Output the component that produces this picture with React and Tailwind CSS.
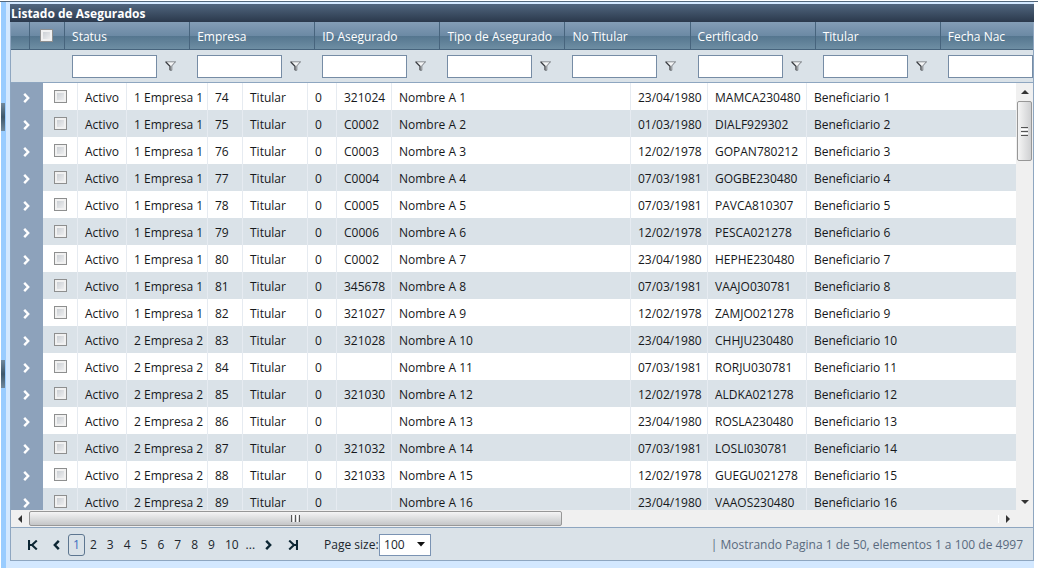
import { useState } from "react";
import clsx from "clsx";

const filters = ["Status", "Empresa", "ID Asegurado", "Tipo de Asegurado", "No Titular", "Certificado", "Titular", "Fecha Nac"];

// empresa, id, certificado, no, fecha, clave
const data = [
    [1, 74, "321024", 1, "23/04/1980", "MAMCA230480"],
    [1, 75, "C0002", 2, "01/03/1980", "DIALF929302"],
    [1, 76, "C0003", 3, "12/02/1978", "GOPAN780212"],
    [1, 77, "C0004", 4, "07/03/1981", "GOGBE230480"],
    [1, 78, "C0005", 5, "07/03/1981", "PAVCA810307"],
    [1, 79, "C0006", 6, "12/02/1978", "PESCA021278"],
    [1, 80, "C0002", 7, "23/04/1980", "HEPHE230480"],
    [1, 81, "345678", 8, "07/03/1981", "VAAJO030781"],
    [1, 82, "321027", 9, "12/02/1978", "ZAMJO021278"],
    [2, 83, "321028", 10, "23/04/1980", "CHHJU230480"],
    [2, 84, "", 11, "07/03/1981", "RORJU030781"],
    [2, 85, "321030", 12, "12/02/1978", "ALDKA021278"],
    [2, 86, "", 13, "23/04/1980", "ROSLA230480"],
    [2, 87, "321032", 14, "07/03/1981", "LOSLI030781"],
    [2, 88, "321033", 15, "12/02/1978", "GUEGU021278"],
    [2, 89, "", 16, "23/04/1980", "VAAOS230480"],
];

function FunnelIcon() {
    return (
        <svg width="11" height="10" viewBox="0 0 11 10" fill="none">
            <path d="M0.4 0.8h10.2L6.9 4.8v4L4.6 9.5V4.8z" fill="#f4f5f6" />
            <path d="M0 0.8h11" stroke="#8b8f95" strokeWidth="1" />
            <path d="M0.8 1L5 5.2v4" stroke="#3a3d42" strokeWidth="1.3" />
            <path d="M10.2 1L6.8 4.9v4.4H5" stroke="#6c7076" strokeWidth="0.9" />
        </svg>
    );
}

function Chevron({ flip, className }) {
    return (
        <svg width="7" height="10" viewBox="0 0 7 10" fill="none" className={className}>
            <path d={flip ? "M5.8 0.8L1.8 5l4 4.2" : "M1.2 0.8L5.2 5l-4 4.2"} stroke="currentColor" strokeWidth="2.4" />
        </svg>
    );
}

function EdgeArrow({ flip }) {
    return (
        <svg width="10" height="10" viewBox="0 0 10 10" fill="none" className="text-[#0c2633]">
            <path
                d={flip ? "M1 0v10M8.8 0.6L4 5l4.8 4.4M1 5h3" : "M9 0v10M1.2 0.6L6 5l-4.8 4.4M9 5H6"}
                stroke="currentColor"
                strokeWidth="2.1"
            />
        </svg>
    );
}

function Triangle({ points, className }) {
    return (
        <svg width="8" height="8" viewBox="0 0 8 8" className={className}>
            <path d={points} fill="currentColor" />
        </svg>
    );
}

function CheckBox(props) {
    return (
        <input
            type="checkbox"
            {...props}
            className="block size-[13px] appearance-none border border-[#8e8f8f] bg-linear-to-br from-[#c3c8ce] to-[#f6f6f6] ring-2 ring-inset ring-[#f1f1f1] checked:from-[#3b5470] checked:to-[#3b5470]"
        />
    );
}

function Cell({ children, last }) {
    return <td className={clsx("overflow-hidden pt-0.5 pl-[7px] whitespace-nowrap", !last && "border-r border-[#e6ebf1]")}>{children}</td>;
}

function FilterHeader() {
    return (
        <div className="overflow-hidden">
            <table className="w-[1055px] table-fixed border-separate border-spacing-0">
                <colgroup>
                    <col className="w-[19px]" />
                    <col className="w-[35px]" />
                    {filters.map((name) => <col key={name} className="w-[125px]" />)}
                </colgroup>
                <thead>
                    <tr className="h-7 bg-[linear-gradient(#849db6,#6b89a4_50%,#55768f_51%,#7090a5)] text-left text-white">
                        <th aria-label="Expandir" className="border-r border-b border-[#47647d]" />
                        <th className="border-r border-b border-[#47647d] pl-2.5">
                            <CheckBox aria-label="Seleccionar todos" />
                        </th>
                        {filters.map((name) => (
                            <th key={name} className="border-r border-b border-[#47647d] pt-0.5 pl-[7px] font-normal whitespace-nowrap">{name}</th>
                        ))}
                    </tr>
                    <tr className="h-[33px] bg-[#dae2e8]">
                        <td className="border-b border-[#8ea6c0]" />
                        <td className="border-b border-[#8ea6c0]" />
                        {filters.map((name) => (
                            <td key={name} className="border-b border-[#8ea6c0] pl-[7px]">
                                <div className="flex items-center gap-2">
                                    <input aria-label={`Filtrar ${name}`} className="h-[23px] w-[85px] border border-[#768ca5] bg-white px-1 outline-none" />
                                    <button aria-label={`Opciones de filtro ${name}`}><FunnelIcon /></button>
                                </div>
                            </td>
                        ))}
                    </tr>
                </thead>
            </table>
        </div>
    );
}

function Rows() {
    return (
        <div className="min-w-0 flex-1 overflow-hidden bg-white">
            <table className="w-full min-w-[1005px] table-fixed border-separate border-spacing-0">
                <colgroup>
                    <col className="w-8" />
                    <col className="w-[35px]" />
                    <col className="w-[49px]" />
                    <col className="w-[81px]" />
                    <col className="w-[35px]" />
                    <col className="w-[65px]" />
                    <col className="w-[29px]" />
                    <col className="w-[55px]" />
                    <col className="w-[239px]" />
                    <col className="w-[77px]" />
                    <col className="w-[99px]" />
                    <col />
                </colgroup>
                <tbody>
                    {data.map(([empresa, id, cert, num, fecha, clave], idx) => (
                        <tr key={id} className={clsx("h-[27px] text-[#16181b]", idx % 2 ? "bg-[#dae2e8]" : "bg-white")}>
                            <td className="bg-[#8da2bb] pt-0.5">
                                <button aria-label={`Expandir ${id}`} className="block pl-3 text-white"><Chevron /></button>
                            </td>
                            <td className="border-r border-[#e6ebf1] pl-[11px]">
                                <CheckBox aria-label={`Seleccionar ${id}`} />
                            </td>
                            <Cell>Activo</Cell>
                            <Cell>{empresa} Empresa {empresa}</Cell>
                            <Cell>{id}</Cell>
                            <Cell>Titular</Cell>
                            <Cell>0</Cell>
                            <Cell>{cert}</Cell>
                            <Cell>Nombre A {num}</Cell>
                            <Cell>{fecha}</Cell>
                            <Cell>{clave}</Cell>
                            <Cell last>Beneficiario {num}</Cell>
                        </tr>
                    ))}
                </tbody>
            </table>
        </div>
    );
}

function VerticalBar() {
    return (
        <div className="flex w-[17px] shrink-0 flex-col items-center bg-[#f0f0f0] text-[#333]">
            <div className="flex h-[18px] items-center"><Triangle points="M0 6l4-4 4 4z" /></div>
            <div className="flex h-[60px] w-[15px] flex-col items-center justify-center gap-px rounded-xs border border-[#979797] bg-linear-to-r from-[#f5f5f5] to-[#cfd0d2]">
                <i className="h-px w-[7px] bg-[#555]" />
                <i className="h-px w-[7px] bg-white" />
                <i className="h-px w-[7px] bg-[#555]" />
                <i className="h-px w-[7px] bg-white" />
                <i className="h-px w-[7px] bg-[#555]" />
            </div>
            <div className="mt-auto flex h-[17px] items-center"><Triangle points="M0 2l4 4 4-4z" /></div>
        </div>
    );
}

function HorizontalBar() {
    return (
        <div className="flex h-[17px] items-center bg-[#f0f0f0] pr-[17px] text-[#333]">
            <div className="flex w-[18px] justify-center"><Triangle points="M6 0L2 4l4 4z" /></div>
            <div className="flex h-[15px] w-[53%] items-center justify-center gap-px rounded-xs border border-[#979797] bg-linear-to-b from-[#f5f5f5] to-[#c4c6c8]">
                <i className="h-[7px] w-px bg-[#555]" />
                <i className="h-[7px] w-px bg-white" />
                <i className="h-[7px] w-px bg-[#555]" />
                <i className="h-[7px] w-px bg-white" />
                <i className="h-[7px] w-px bg-[#555]" />
            </div>
            <div className="ml-auto flex w-[18px] justify-center border-l border-white"><Triangle points="M2 0l4 4-4 4z" /></div>
        </div>
    );
}

function Pager() {
    const [page, setPage] = useState(1);

    return (
        <div className="flex h-[34px] items-center border-y border-[#8ea6c0] bg-[#dae2e8] pt-px pr-2.5 pl-[17px] text-[#20262d]">
            <button aria-label="Primera pagina"><EdgeArrow flip /></button>
            <button aria-label="Pagina anterior" className="ml-[15px] text-[#0c2633]"><Chevron flip /></button>
            <div className="ml-2 flex items-center">
                {[1, 2, 3, 4, 5, 6, 7, 8, 9, 10].map((n) => (
                    <button
                        key={n}
                        onClick={() => setPage(n)}
                        className={clsx(
                            "h-[22px] rounded-[3px] border px-1",
                            n === page ? "border-[#5d7690] text-[#3c6fc0]" : "border-transparent"
                        )}
                    >
                        {n}
                    </button>
                ))}
                <span className="ml-0.5">...</span>
            </div>
            <button aria-label="Pagina siguiente" className="ml-2.5 text-[#0c2633]"><Chevron /></button>
            <button aria-label="Ultima pagina" className="ml-4"><EdgeArrow /></button>
            <label htmlFor="page-size" className="ml-[26px] w-[55px] whitespace-nowrap">Page size:</label>
            <div className="relative">
                <select id="page-size" className="h-[22px] w-[52px] appearance-none border border-[#7a93b3] bg-white pl-1 outline-none">
                    <option>100</option>
                </select>
                <svg width="8" height="5" viewBox="0 0 8 5" className="pointer-events-none absolute top-2 right-1.5">
                    <path d="M0 0h8L4 4.6z" fill="#111" />
                </svg>
            </div>
            <span className="ml-auto whitespace-nowrap text-[#596a7e]">| Mostrando Pagina 1 de 50, elementos 1 a 100 de 4997</span>
        </div>
    );
}

export default function App() {
    return (
        <div className="mt-px border-t border-[#52677b] bg-white pl-px font-['Open_Sans','Noto_Sans',sans-serif] text-[12px] leading-4">
            <div className="mr-1 flex bg-[#d3e8ff] pb-[7px]">
                <div className="-mb-[7px] w-[5px] shrink-0 bg-[#99ccff] pt-[101px]">
                    <div className="h-7 w-1 bg-linear-to-b from-[#71899d] via-[#3f586c] to-[#71899d]" />
                    <div className="mt-[229px] h-7 w-1 bg-linear-to-b from-[#71899d] via-[#3f586c] to-[#71899d]" />
                </div>
                <main className="mt-0.5 ml-1 min-w-0 flex-1">
                    <h1 className="h-[18px] bg-linear-to-b from-[#51667f] to-[#2b394c] pl-px text-[12px] leading-[19px] font-bold text-white">
                        Listado de Asegurados
                    </h1>
                    <div className="border-x border-[#8ea6c0]">
                        <FilterHeader />
                        <div className="flex h-[427px]">
                            <Rows />
                            <VerticalBar />
                        </div>
                        <HorizontalBar />
                        <Pager />
                    </div>
                </main>
            </div>
        </div>
    );
}
